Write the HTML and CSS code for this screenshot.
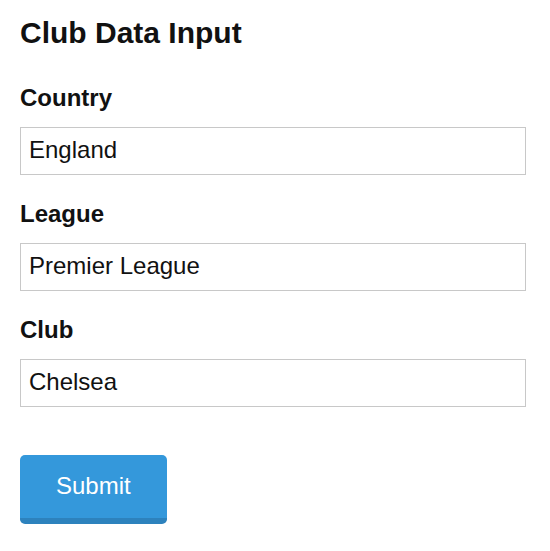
FILE: index.html
```html
<!DOCTYPE html>
<html lang="en">
<head>
<meta charset="utf-8">
<title>Club Data Input</title>
<link rel="stylesheet" href="styles.css">
</head>
<body>
<main class="page">
  <h1 class="title">Club Data Input</h1>
  <form class="form">
    <div class="field">
      <label class="label" for="country">Country</label>
      <input class="input" id="country" type="text" value="England">
    </div>
    <div class="field">
      <label class="label" for="league">League</label>
      <input class="input" id="league" type="text" value="Premier League">
    </div>
    <div class="field">
      <label class="label" for="club">Club</label>
      <input class="input" id="club" type="text" value="Chelsea">
    </div>
    <div class="actions">
      <button class="submit" type="button">Submit</button>
    </div>
  </form>
</main>
</body>
</html>
```

FILE: styles.css
```css
html, body {
  margin: 0;
  padding: 0;
  background: #ffffff;
}

body {
  font-family: "Liberation Sans", Arial, sans-serif;
  color: #111111;
}

.page {
  padding: 16px 24px 16px 20px;
}

.title {
  margin: 0 0 34px 0;
  font-size: 30px;
  font-weight: bold;
  line-height: normal;
}

.form {
  display: flex;
  flex-direction: column;
  gap: 25px;
}

.field {
  display: flex;
  flex-direction: column;
  gap: 15px;
}

.label {
  font-size: 24px;
  font-weight: bold;
  line-height: normal;
  color: #111111;
}

.input {
  box-sizing: border-box;
  width: 100%;
  height: 48px;
  margin: 0;
  padding: 6px 8px 8px;
  border: 1px solid #c8c8c8;
  border-radius: 0;
  font-family: "Liberation Sans", Arial, sans-serif;
  font-size: 24px;
  color: #111111;
  background: #ffffff;
  outline: none;
}

.actions {
  padding-top: 23px;
}

.submit {
  margin: 0;
  padding: 17px 36px 18px;
  border: none;
  border-bottom: 6px solid #2d82bd;
  border-radius: 5px;
  background: #3498db;
  color: #ffffff;
  font-family: "Liberation Sans", Arial, sans-serif;
  font-size: 24px;
  line-height: normal;
  cursor: pointer;
}
```
